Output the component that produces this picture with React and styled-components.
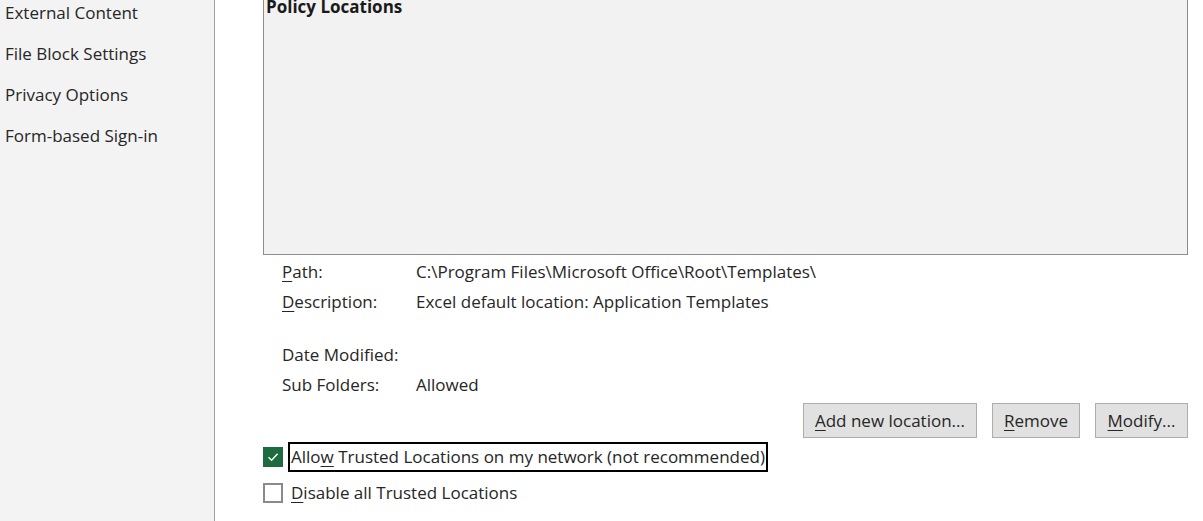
import React from "react";
import styled, { createGlobalStyle } from "styled-components";

const Global = createGlobalStyle`
  html, body { margin: 0; padding: 0; background: #fff; }
  body { font-family: "Open Sans", "Noto Sans", sans-serif; color: #262626; overflow: hidden; }
  * { box-sizing: border-box; }
`;

const Page = styled.div`
  display: flex;
  width: 1203px;
  height: 521px;
  overflow: hidden;
`;

const Sidebar = styled.nav`
  width: 215px;
  flex: none;
  background: #f3f3f3;
  border-right: 1px solid #a0a0a0;
  display: flex;
  flex-direction: column;
  margin-top: -8px;
`;

const NavItem = styled.div`
  height: 41px;
  line-height: 41px;
  padding-left: 5px;
  font-size: 17px;
  color: #262626;
  white-space: nowrap;
`;

const Main = styled.main`
  flex: 1;
  padding: 0 15px 0 48px;
  display: flex;
  flex-direction: column;
`;

const ListBox = styled.div`
  height: 265px;
  margin-top: -10px;
  background: #f2f2f2;
  border: 1px solid #8c8c8c;
  padding: 2px 2px;
`;

const ListHeader = styled.div`
  font-weight: 700;
  font-size: 17px;
  color: #1a1a1a;
  line-height: 22px;
  margin-top: 3px;
`;

const Details = styled.div`
  display: grid;
  grid-template-columns: 134px 1fr;
  padding-left: 19px;
  margin-top: 2px;
  font-size: 17px;
`;

const Cell = styled.div`
  height: ${p => p.$h || 30}px;
  line-height: 30px;
  padding-top: ${p => p.$pt || 0}px;
  white-space: nowrap;
`;

const U = styled.span`
  text-decoration: underline;
  text-underline-offset: 3px;
  text-decoration-thickness: 1px;
`;

const ButtonRow = styled.div`
  display: flex;
  justify-content: flex-end;
  gap: 15px;
  margin-top: 3px;
`;

const Button = styled.button`
  height: 35px;
  width: ${p => p.$w}px;
  background: #e1e1e1;
  border: 1px solid #adadad;
  font-family: inherit;
  font-size: 17px;
  color: #262626;
  padding: 0;
`;

const Checks = styled.div`
  display: flex;
  flex-direction: column;
  margin-top: 4px;
  gap: 6px;
`;

const CheckRow = styled.label`
  display: flex;
  align-items: center;
  height: 30px;
  gap: 5px;
  font-size: 17px;
`;

const Box = styled.span`
  width: 20px;
  height: 20px;
  flex: none;
  display: flex;
  align-items: center;
  justify-content: center;
  background: ${p => (p.$checked ? "#1d6b3f" : "#fff")};
  border: ${p => (p.$checked ? "none" : "2px solid #8a8a8a")};
`;

const CheckLabel = styled.span`
  height: 30px;
  line-height: 26px;
  padding: 0 1px;
  border: 2px solid ${p => (p.$focus ? "#000" : "transparent")};
  white-space: nowrap;
`;

export default function App() {
  return (
    <>
      <Global />
      <Page>
        <Sidebar>
          <NavItem>External Content</NavItem>
          <NavItem>File Block Settings</NavItem>
          <NavItem>Privacy Options</NavItem>
          <NavItem>Form-based Sign-in</NavItem>
        </Sidebar>
        <Main>
          <ListBox>
            <ListHeader>Policy Locations</ListHeader>
          </ListBox>
          <Details>
            <Cell><U>P</U>ath:</Cell>
            <Cell>C:\Program Files\Microsoft Office\Root\Templates\</Cell>
            <Cell><U>D</U>escription:</Cell>
            <Cell>Excel default location: Application Templates</Cell>
            <Cell $h={53} $pt={23}>Date Modified:</Cell>
            <Cell $h={53} $pt={23}></Cell>
            <Cell>Sub Folders:</Cell>
            <Cell>Allowed</Cell>
          </Details>
          <ButtonRow>
            <Button $w={174}><U>A</U>dd new location...</Button>
            <Button $w={88}><U>R</U>emove</Button>
            <Button $w={93}><U>M</U>odify...</Button>
          </ButtonRow>
          <Checks>
            <CheckRow>
              <Box $checked>
                <svg width="14" height="14" viewBox="0 0 14 14">
                  <path d="M2.5 7.2 L5.6 10.2 L11.6 3.8" fill="none" stroke="#fff" strokeWidth="1.4" />
                </svg>
              </Box>
              <CheckLabel $focus>Allo<U>w</U> Trusted Locations on my network (not recommended)</CheckLabel>
            </CheckRow>
            <CheckRow>
              <Box />
              <CheckLabel><U>D</U>isable all Trusted Locations</CheckLabel>
            </CheckRow>
          </Checks>
        </Main>
      </Page>
    </>
  );
}
